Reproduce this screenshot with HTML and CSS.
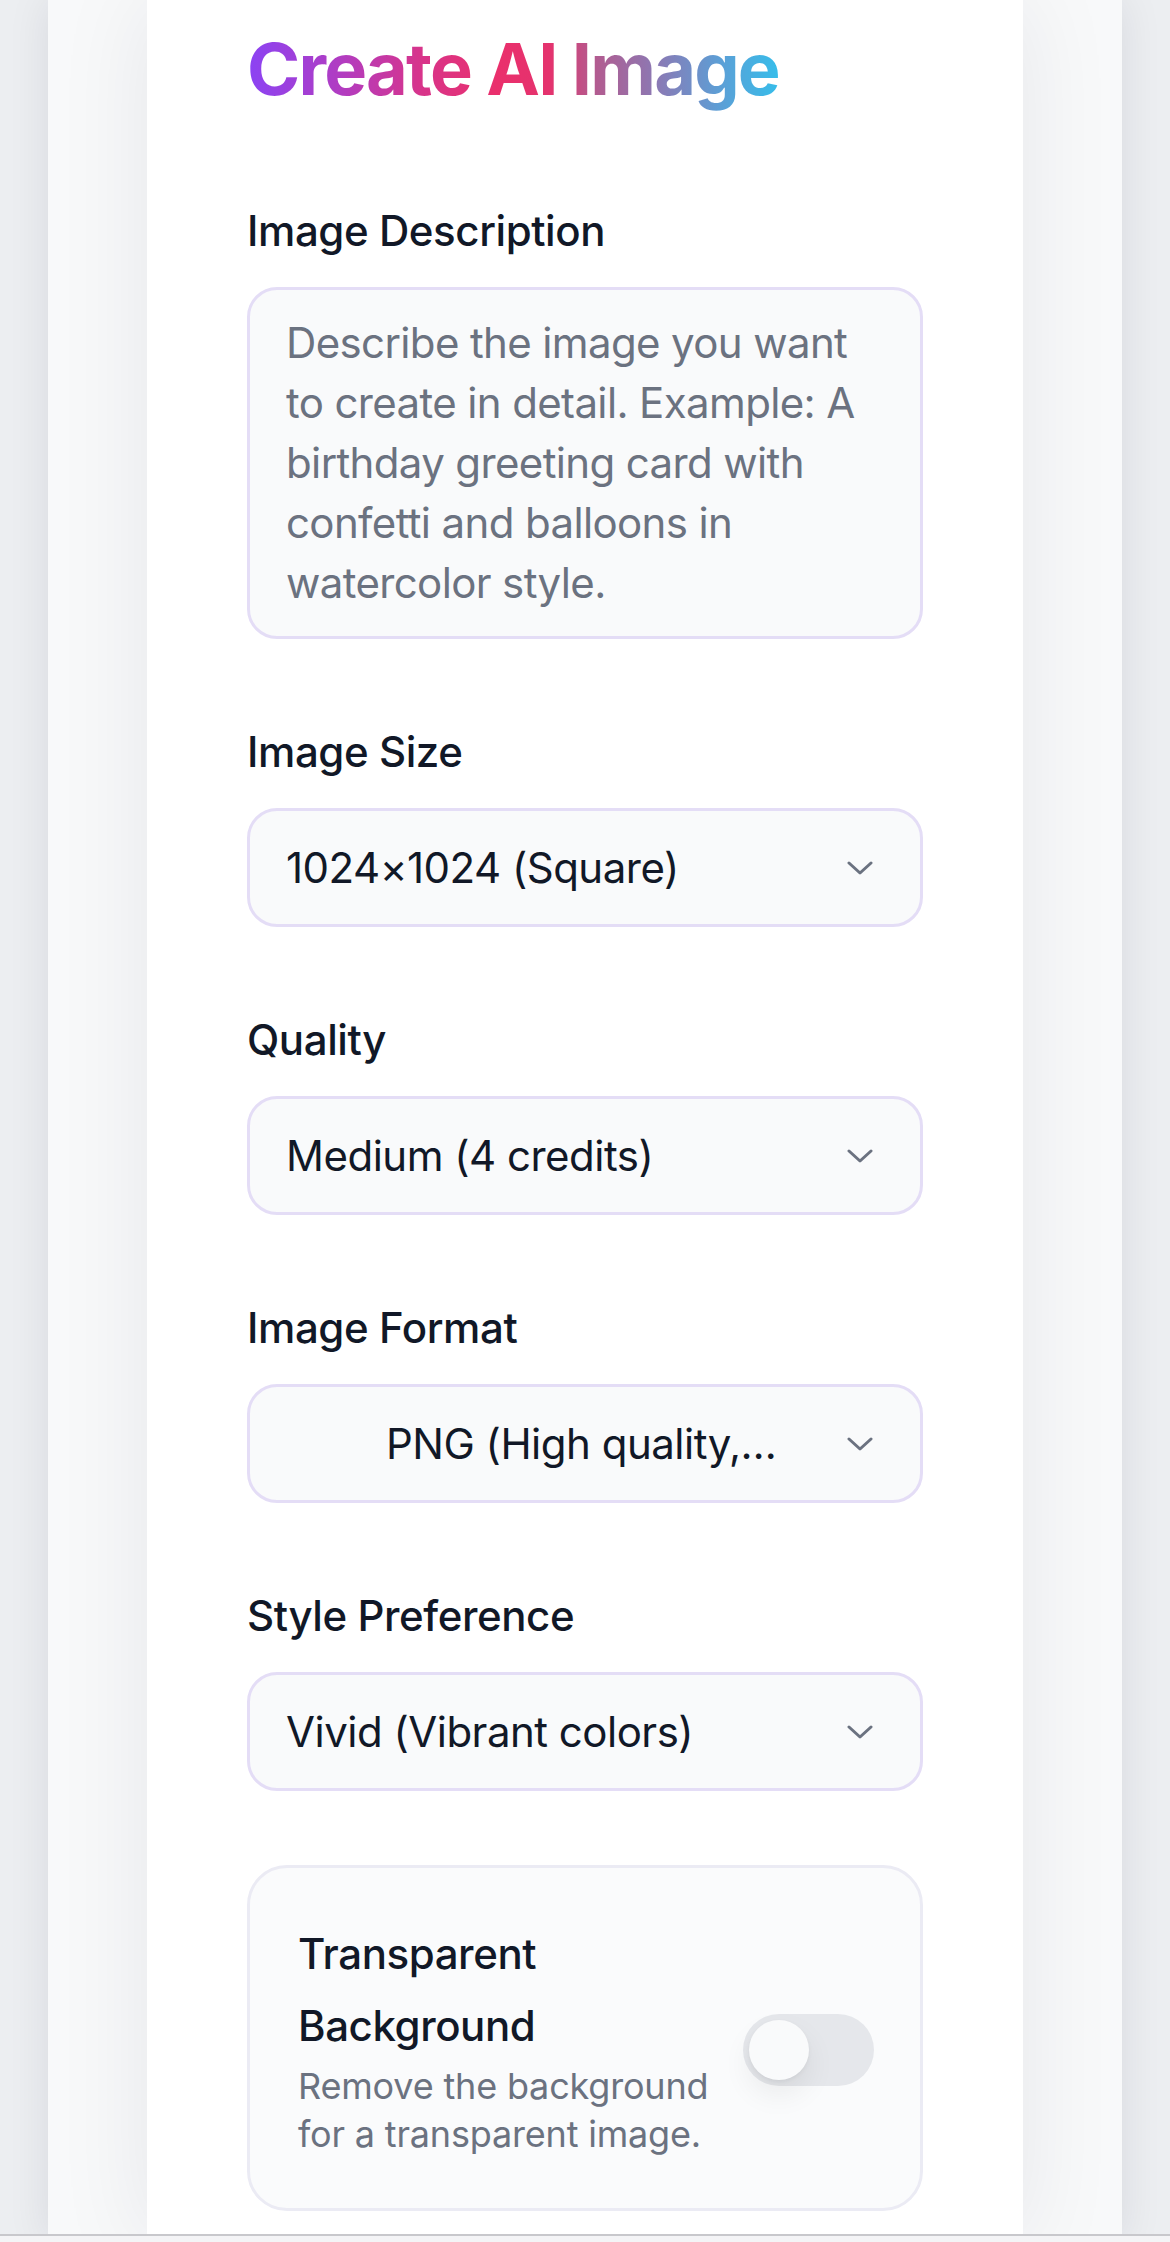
FILE: index.html
```html
<!DOCTYPE html>
<html lang="en">
<head>
<meta charset="utf-8">
<title>Create AI Image</title>
<link rel="stylesheet" href="styles.css">
</head>
<body>
<div class="backdrop">
  <main class="sheet">
    <h1 class="title"><span class="title-text">Create AI Image</span></h1>

    <div class="field">
      <label class="field-label" for="desc">Image Description</label>
      <textarea id="desc" class="textarea" placeholder="Describe the image you want to create in detail. Example: A birthday greeting card with confetti and balloons in watercolor style."></textarea>
    </div>

    <div class="field">
      <label class="field-label">Image Size</label>
      <div class="select">
        <span class="select-value">1024×1024 (Square)</span>
        <svg class="chevron" viewBox="0 0 26 14" width="26" height="14"><path d="M2 2 L13 12 L24 2" /></svg>
      </div>
    </div>

    <div class="field">
      <label class="field-label">Quality</label>
      <div class="select">
        <span class="select-value">Medium (4 credits)</span>
        <svg class="chevron" viewBox="0 0 26 14" width="26" height="14"><path d="M2 2 L13 12 L24 2" /></svg>
      </div>
    </div>

    <div class="field">
      <label class="field-label">Image Format</label>
      <div class="select">
        <span class="select-value select-value--indented">PNG (High quality,…</span>
        <svg class="chevron" viewBox="0 0 26 14" width="26" height="14"><path d="M2 2 L13 12 L24 2" /></svg>
      </div>
    </div>

    <div class="field">
      <label class="field-label">Style Preference</label>
      <div class="select">
        <span class="select-value">Vivid (Vibrant colors)</span>
        <svg class="chevron" viewBox="0 0 26 14" width="26" height="14"><path d="M2 2 L13 12 L24 2" /></svg>
      </div>
    </div>

    <div class="toggle-card">
      <div class="toggle-text">
        <div class="toggle-title">Transparent Background</div>
        <div class="toggle-desc">Remove the background for a transparent image.</div>
      </div>
      <div class="toggle">
        <div class="toggle-thumb"></div>
      </div>
    </div>
  </main>
</div>
<div class="bottom-bar"></div>
</body>
</html>
```

FILE: styles.css
```css
* {
  box-sizing: border-box;
}

html, body {
  margin: 0;
  padding: 0;
}

body {
  height: 2242px;
  overflow: hidden;
  background: #eceef1;
  font-family: Inter, "Noto Sans", "Liberation Sans", sans-serif;
  color: #111827;
}

.backdrop {
  margin: 0 48px;
  min-height: 2242px;
  background: #f8f9fa;
  box-shadow: 0 0 40px rgba(20, 20, 45, 0.09);
}

.sheet {
  margin: 0 99px;
  min-height: 2242px;
  background: #ffffff;
  box-shadow: 0 0 90px rgba(20, 20, 45, 0.08);
  padding: 21px 100px 0 100px;
  display: flex;
  flex-direction: column;
  gap: 83px;
}

.title {
  margin: 0 0 1px 0;
  font-size: 72px;
  line-height: 96px;
  font-weight: 700;
  letter-spacing: -0.025em;
}

.title-text {
  display: inline-block;
  background: linear-gradient(90deg, #8b43f4 0%, #b23cc0 18%, #d8348a 33%, #ea2f6c 47%, #e4336e 57%, #b45a8e 65%, #8b79b4 77%, #5c9fd6 89%, #36bdea 100%);
  -webkit-background-clip: text;
  background-clip: text;
  color: transparent;
}

.field {
  display: flex;
  flex-direction: column;
}

.field-label {
  display: block;
  font-size: 42px;
  line-height: 60px;
  font-weight: 500;
  color: #111827;
  margin-bottom: 26px;
  letter-spacing: -0.01em;
}

.textarea {
  display: block;
  width: 100%;
  height: 352px;
  padding: 23px 36px;
  border: 3px solid #e4ddf6;
  border-radius: 30px;
  background: #f9fafb;
  font-family: inherit;
  font-size: 42px;
  line-height: 60px;
  color: #111827;
  resize: none;
  outline: none;
  letter-spacing: -0.015em;
}

.textarea::placeholder {
  color: #6b7280;
  opacity: 1;
}

.select {
  height: 119px;
  border: 3px solid #e4ddf6;
  border-radius: 30px;
  background: #f9fafb;
  display: flex;
  align-items: center;
  justify-content: space-between;
  padding: 0 47px 0 36px;
}

.select-value {
  font-size: 42px;
  line-height: 60px;
  color: #111827;
  white-space: nowrap;
  letter-spacing: -0.012em;
}

.select-value--indented {
  padding-left: 100px;
}

.chevron {
  width: 26px;
  height: 14px;
  flex-shrink: 0;
}

.chevron path {
  fill: none;
  stroke: #6b7280;
  stroke-width: 3;
  stroke-linecap: round;
  stroke-linejoin: round;
}

.toggle-card {
  margin-top: -9px;
  border: 3px solid #ebebf4;
  border-radius: 40px;
  background: #fafbfc;
  padding: 50px 46px 50px 48px;
  display: flex;
  align-items: center;
  gap: 24px;
}

.toggle-text {
  flex: 1;
  min-width: 0;
}

.toggle-title {
  font-size: 42px;
  line-height: 72px;
  font-weight: 500;
  color: #111827;
  letter-spacing: -0.01em;
}

.toggle-desc {
  font-size: 36px;
  line-height: 48px;
  color: #6b7280;
  letter-spacing: -0.005em;
}

.toggle {
  flex-shrink: 0;
  width: 131px;
  height: 72px;
  border-radius: 36px;
  background: #e5e7eb;
  padding: 6px;
  margin-top: 24px;
}

.toggle-thumb {
  width: 60px;
  height: 60px;
  border-radius: 50%;
  background: #f9fafb;
  box-shadow: 0 14px 30px rgba(0, 0, 0, 0.07), 0 2px 4px rgba(0, 0, 0, 0.05);
}

.bottom-bar {
  position: fixed;
  left: 0;
  right: 0;
  bottom: 0;
  height: 8px;
  background: #f4f4f6;
  border-top: 2px solid #c8c8cc;
}
```
